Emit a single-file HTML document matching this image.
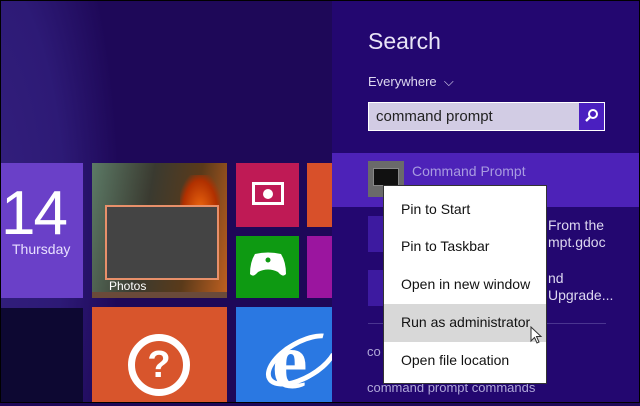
<!DOCTYPE html>
<html><head><style>
*{margin:0;padding:0;box-sizing:border-box}
body{width:640px;height:403px;overflow:hidden;background:#1e0858;font-family:"Liberation Sans",sans-serif;position:relative}
.a{position:absolute}
.t{position:absolute;white-space:nowrap}
</style></head><body>
<div class="a" style="left:0;top:0;width:160px;height:403px;background:radial-gradient(ellipse 140px 420px at -20px 220px,#34207e 0,#2d1a76 60%,rgba(30,8,88,0) 100%)"></div>
<div class="a" style="left:1px;top:163px;width:82px;height:135px;background:#6a40c8"></div>
<div class="t" style="left:1px;top:178px;font-size:62px;color:#fff;letter-spacing:-2px">14</div>
<div class="t" style="left:12px;top:241px;font-size:14px;color:#e8e0ff">Thursday</div>
<div class="a" style="left:92px;top:163px;width:135px;height:135px;background:linear-gradient(100deg,#5c7a66 0,#3a3a30 40%,#5a3a1a 70%,#c06020 100%)"></div>
<div class="a" style="left:180px;top:175px;width:40px;height:60px;background:radial-gradient(ellipse at 50% 60%,#f06a10,#b03000 60%,rgba(0,0,0,0) 80%)"></div>
<div class="a" style="left:105px;top:205px;width:114px;height:75px;background:#444;border:2px solid #e8906a"></div>
<div class="t" style="left:109px;top:279px;font-size:12px;color:#fff">Photos</div>
<div class="a" style="left:92px;top:292px;width:135px;height:6px;background:#6a4a3a"></div>
<div class="a" style="left:236px;top:163px;width:63px;height:64px;background:#bf1a55"></div>
<div class="a" style="left:252px;top:182px;width:32px;height:23px;border:3px solid #fff"></div>
<div class="a" style="left:263px;top:189px;width:10px;height:10px;border-radius:50%;background:#fff"></div>
<div class="a" style="left:307px;top:163px;width:25px;height:64px;background:#d8502a"></div>
<div class="a" style="left:236px;top:236px;width:63px;height:62px;background:#0e9a12"></div>
<svg class="a" style="left:249px;top:252px" width="38" height="26"><path d="M6 2 Q19 -1 32 2 Q37 10 37 22 Q34 26 29 20 Q19 15 9 20 Q4 26 1 22 Q1 10 6 2 Z" fill="#fff"/><circle cx="19" cy="8" r="2.5" fill="#0e9a12"/></svg>
<div class="a" style="left:307px;top:236px;width:25px;height:62px;background:#9b159f"></div>
<div class="a" style="left:1px;top:308px;width:82px;height:95px;background:#0d0832"></div>
<div class="a" style="left:92px;top:307px;width:135px;height:96px;background:#d8552c"></div>
<div class="a" style="left:128px;top:334px;width:62px;height:62px;border:7px solid #fff;border-radius:50%;color:#fff;font-weight:bold;font-size:38px;text-align:center;line-height:48px">?</div>
<div class="a" style="left:236px;top:307px;width:96px;height:96px;background:#2a78e2"></div>
<div class="t" style="left:272px;top:322px;font-size:80px;color:#fff;font-weight:bold;font-family:'Liberation Serif',serif;line-height:80px">e</div>
<div class="a" style="left:262px;top:340px;width:80px;height:40px;border:5px solid #fff;border-radius:50%;transform:rotate(-30deg);border-right-color:transparent"></div>
<div class="a" style="left:332px;top:0;width:308px;height:403px;background:#230770"></div>
<div class="t" style="left:368px;top:28px;font-size:23px;color:#e8e4f6">Search</div>
<div class="t" style="left:368px;top:74px;font-size:13px;color:#ddd8f0">Everywhere &nbsp;⌵</div>
<div class="a" style="left:368px;top:102px;width:237px;height:29px;background:#d2cce4;border:1px solid #fff"></div>
<div class="t" style="left:376px;top:108px;font-size:15px;color:#222">command prompt</div>
<div class="a" style="left:579px;top:103px;width:25px;height:27px;background:#4a1fc0"></div>
<svg class="a" style="left:583px;top:107px" width="18" height="18"><circle cx="10" cy="7" r="4" stroke="#fff" stroke-width="2" fill="none"/><path d="M7 10 L3 14" stroke="#fff" stroke-width="2.4"/></svg>
<div class="a" style="left:332px;top:153px;width:308px;height:54px;background:#4d22b8"></div>
<div class="a" style="left:368px;top:161px;width:36px;height:36px;background:#6a6a6a"></div>
<div class="a" style="left:373px;top:168px;width:26px;height:18px;background:#111;border:1px solid #888"></div>
<div class="t" style="left:412px;top:163px;font-size:14px;color:#a89be0">Command Prompt</div>
<div class="a" style="left:368px;top:216px;width:30px;height:36px;background:#3d1aa0"></div>
<div class="a" style="left:368px;top:270px;width:30px;height:36px;background:#3d1aa0"></div>
<div class="t" style="left:548px;top:217px;font-size:14px;color:#ddd8f0">From the</div>
<div class="t" style="left:548px;top:234px;font-size:14px;color:#ddd8f0">mpt.gdoc</div>
<div class="t" style="left:548px;top:270px;font-size:14px;color:#ddd8f0">nd</div>
<div class="t" style="left:548px;top:287px;font-size:14px;color:#ddd8f0">Upgrade...</div>
<div class="a" style="left:368px;top:323px;width:238px;height:1px;background:#4a3590"></div>
<div class="t" style="left:367px;top:344px;font-size:13px;color:#b0a8d8">co</div>
<div class="t" style="left:367px;top:380px;font-size:13px;color:#b0a8d8">command prompt commands</div>
<div class="a" style="left:383px;top:185px;width:164px;height:199px;background:#fff;border:1px solid #333"></div>
<div class="a" style="left:384px;top:304px;width:162px;height:38px;background:#d8d8d8"></div>
<div class="t" style="left:401px;top:201px;font-size:14px;color:#111">Pin to Start</div>
<div class="t" style="left:401px;top:238px;font-size:14px;color:#111">Pin to Taskbar</div>
<div class="t" style="left:401px;top:276px;font-size:14px;color:#111">Open in new window</div>
<div class="t" style="left:401px;top:314px;font-size:14px;color:#111">Run as administrator</div>
<div class="t" style="left:401px;top:352px;font-size:14px;color:#111">Open file location</div>
<svg class="a" style="left:530px;top:326px" width="14" height="20"><path d="M1 1 L1 15 L4.5 11.5 L7 17 L9 16 L6.5 10.5 L11 10.5 Z" fill="#fff" stroke="#333" stroke-width="1"/></svg>
<div class="a" style="left:0;top:0;width:640px;height:403px;border:1px solid #000"></div>
</body></html>
